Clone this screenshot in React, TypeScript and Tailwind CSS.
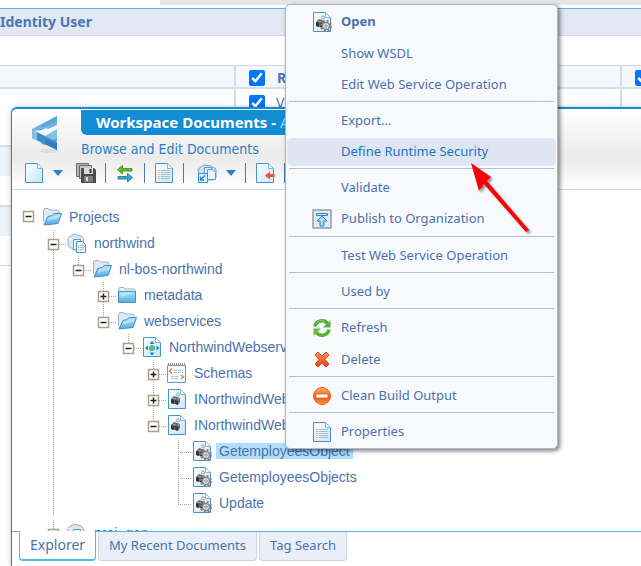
import { useState, type ReactNode } from "react";

/* ---------- icons ---------- */

type IconName =
  | "folder" | "folderOpen" | "project" | "package" | "schema" | "service"
  | "operation" | "publish" | "refresh" | "delete" | "stop" | "list"
  | "page" | "saveAll" | "swap" | "link" | "exit";

const Sheet = () => (
  <>
    <path d="M1.5 .5h12l5 5v14h-17z" fill="url(#sheet)" stroke="#4a93c9" />
    <path d="M13.5 .5v5h5z" fill="#fff" stroke="#7fb9e2" />
  </>
);

const Camera = () => (
  <g>
    <path d="M4 10l3-3 3 1 3 1v4l-2 3-2-2-2 1-3-1z" fill="#6b6b6b" />
    <path d="M4 10l3 1v4l-3-1zM8 11l3 1v4l-3-1z" fill="#333" />
    <circle cx="11" cy="5.500" r="1.500" fill="none" stroke="#9d9d9d" />
    <path d="M6 9l3 1M11 8l1 3" stroke="#a5a5a5" />
  </g>
);

const drawings: Record<IconName, ReactNode> = {
  folder: (
    <>
      <path d="M1.500 16V4l1-1.500h4L8 4h9l1.500 1.500V16z" fill="#e5edf2" stroke="#9db3c1" />
      <path d="M1.500 6.500h17v11h-17z" fill="url(#blue)" stroke="#3d93cb" />
      <path d="M3 8l14-1-13 6z" fill="#fff" opacity=".3" />
    </>
  ),
  folderOpen: (
    <>
      <path d="M1.500 15V3l1-1.500h4L8 3h8l1 1v5" fill="#dfe9ef" stroke="#9db3c1" />
      <path d="M6 9.500l4-1 2-2h7.500l-3.500 10L2 18z" fill="url(#blue)" stroke="#3990ca" />
      <path d="M7 10l11-2-1 3-12 3z" fill="#fff" opacity=".35" />
    </>
  ),
  project: (
    <>
      <path d="M1 5l6-4 7 2 3 3-2 9-8 2-6-4z" fill="#dde5eb" stroke="#9aaebb" />
      <path d="M1 5l6 2v9" fill="none" stroke="#fff" />
      <path d="M6.500 6.500h7v10h-7z" fill="#e8f5fd" stroke="#4ba3d8" />
      <path d="M9.500 8.500h6l3 3v8h-9z" fill="#f0f9ff" stroke="#3d96d0" />
      <path d="M11 12.500h1m-1 2h1m-1 2h1" stroke="#f08a3c" />
      <path d="M13 12.500h4m-4 2h4m-4 2h4" stroke="#9dbdd3" />
    </>
  ),
  package: (
    <>
      <Sheet />
      <circle cx="10" cy="11" r="3" fill="#4fb3e4" />
      <path d="M8 10q3-2 3 1t-2 3-2-2z" fill="#69ba5c" />
      <path d="M10 4l2.500 3h-5zM10 18.500l2.500-3h-5zM3 11l3-2.500v5zM17.500 11l-3-2.500v5z" fill="#1487cf" />
    </>
  ),
  schema: (
    <>
      <path d="M.500 2.500h18v17H.500z" fill="#f5faff" stroke="#5a9fd4" />
      <path d="M1 1.500h18" stroke="#888" strokeWidth="3" strokeDasharray="1 1" />
      <path d="M5 5.500L2.500 8 5 10.500M14 12l2.500 2-2.500 2" fill="none" stroke="#ef8b22" strokeWidth="1.500" />
      <path d="M7 7.500h9M7 9.500h9M4 13.500h8M4 15.500h8" stroke="#abc3df" strokeDasharray="3 1" />
    </>
  ),
  service: (
    <>
      <Sheet />
      <Camera />
    </>
  ),
  operation: (
    <>
      <Sheet />
      <Camera />
      <circle cx="14" cy="14" r="5" fill="none" stroke="#808080" strokeWidth="2" strokeDasharray="2 1.927" />
      <circle cx="14" cy="14" r="3.500" fill="#eee" stroke="#858585" strokeWidth="1.500" />
      <circle cx="14" cy="14" r="1.200" fill="#fff" stroke="#858585" />
    </>
  ),
  publish: (
    <>
      <path d="M1 1h18v18H1z" fill="#e2e9f1" stroke="#939ca8" strokeWidth="1.500" />
      <path d="M4.500 4.500h11v2h-11z" fill="#c5e6fa" stroke="#2d86c0" />
      <path d="M10 7l5 5h-3v5H8v-5H5z" fill="#a9dcfa" stroke="#2d86c0" />
    </>
  ),
  refresh: (
    <>
      <path d="M3 8.500C4 2.500 12 1 15.500 5.500" fill="none" stroke="#4fa82e" strokeWidth="3.500" />
      <path d="M18.500 2v7.500H11z" fill="#5bb336" />
      <path d="M17 11.500c-1 6-9 7.500-12.500 3" fill="none" stroke="#58b034" strokeWidth="3.500" />
      <path d="M1.500 18v-7.500H9z" fill="#68bf3d" />
      <path d="M4 6c2-4 7-4 9-2" fill="none" stroke="#9bd76c" />
    </>
  ),
  delete: (
    <path d="M3 5l3-3 4 4 4-4 3 3-4 4.500 4 4.500-3 3-4-4-4 4-3-3 4-4.500z" fill="url(#red)" stroke="#d5491f" />
  ),
  stop: (
    <>
      <circle cx="10" cy="10" r="8.500" fill="url(#orange)" stroke="#e4621d" />
      <rect x="4" y="8" width="12" height="4" fill="#fff" stroke="#e56c32" />
    </>
  ),
  list: (
    <>
      <Sheet />
      <path d="M4 7.500h1.500M4 9.500h1.500M4 11.500h1.500M4 13.500h1.500M4 15.500h1.500" stroke="#ec9c6d" />
      <path d="M7 7.500h9M7 9.500h9M7 11.500h9M7 13.500h9M7 15.500h9" stroke="#a9bfce" />
    </>
  ),
  page: <Sheet />,
  saveAll: (
    <>
      <path d="M.500 .500h12v13H.500z" fill="#b5b5b5" stroke="#6e6e6e" />
      <path d="M3.500 2.500h12v13h-12z" fill="#c9c9c9" stroke="#666" />
      <path d="M5 5h13l2 2v13H5z" fill="#4a4a4a" />
      <path d="M8 5h9v6H8z" fill="#dadada" />
      <path d="M13.500 6h2v4h-2z" fill="#333" />
      <path d="M8 13h9v6H8z" fill="#7d7d7d" />
      <path d="M10 14h2v4h-2z" fill="#ddd" />
    </>
  ),
  swap: (
    <>
      <path d="M2.500 6.500l5-4v3H17v2.500H7.500v3z" fill="#68b82b" stroke="#4f9e1c" />
      <path d="M17.500 14.500l-5-4v3H3V16h9.500v3z" fill="#45a0cf" stroke="#2a84b5" />
    </>
  ),
  link: (
    <>
      <path d="M1 6l6-4 7 1 5 3v9l-3 2H3z" fill="#cfe3ef" stroke="#7aa5bf" />
      <path d="M7.500 4.500h7v9h-7z" fill="#eaf6fd" stroke="#4c9fd2" />
      <path d="M10.500 6.500h5l3 3v7h-8z" fill="#eaf6fd" stroke="#4c9fd2" />
      <path d="M1.500 10.500h9v9h-9z" fill="#d8effc" stroke="#3b95cc" />
      <path d="M8 12.500l-4.500 4.500M3.500 13.500V17H7" fill="none" stroke="#2d88c4" strokeWidth="1.500" />
    </>
  ),
  exit: (
    <>
      <Sheet />
      <path d="M10 12.500l5-4v2.500h4.500v3H15v2.500z" fill="#f0562a" />
    </>
  ),
};

const Icon = ({ name }: { name: IconName }) => (
  <svg viewBox="0 0 20 20" className="size-5 shrink-0" aria-hidden="true">
    {drawings[name]}
  </svg>
);

const Gradients = () => (
  <svg width="0" height="0" className="absolute" aria-hidden="true">
    <defs>
      <linearGradient id="sheet" x1="0" y1="0" x2="1" y2="1">
        <stop offset="0" stopColor="#fbfeff" />
        <stop offset="1" stopColor="#c9e6fa" />
      </linearGradient>
      <linearGradient id="blue" x1="0" y1="0" x2="0" y2="1">
        <stop offset="0" stopColor="#b3e0fa" />
        <stop offset="1" stopColor="#52ade3" />
      </linearGradient>
      <linearGradient id="red" x1="0" y1="0" x2="0" y2="1">
        <stop offset="0" stopColor="#f9935a" />
        <stop offset="1" stopColor="#f03c12" />
      </linearGradient>
      <linearGradient id="orange" x1="0" y1="0" x2="0" y2="1">
        <stop offset="0" stopColor="#fdb45c" />
        <stop offset=".6" stopColor="#f25a17" />
        <stop offset="1" stopColor="#fb9a3a" />
      </linearGradient>
    </defs>
  </svg>
);

/* ---------- page behind the window ---------- */

const Check = ({ label }: { label: string }) => (
  <input type="checkbox" defaultChecked aria-label={label} className="m-0 size-4 shrink-0 accent-[#0075ff]" />
);

const IdentityPage = () => (
  <main className="overflow-hidden">
    <div className="flex h-2 justify-end">
      <div className="h-[5px] w-3/4 bg-[#e6e6e6]" />
    </div>
    <h1 className="h-7 border-t border-b border-t-[#4db8ee] border-b-[#cbd7e9] bg-[#e1e7f3] text-sm leading-[26px] font-bold text-[#4a76b3]">
      Identity User
    </h1>
    <div className="h-[29px]" />
    <table className="w-full table-fixed border-collapse border-t border-[#cfdae9] text-sm text-[#4a76b3]">
      <colgroup>
        <col className="w-[235px]" />
        <col className="w-[386px]" />
        <col />
      </colgroup>
      <thead>
        <tr className="h-[22px] border-b-2 border-[#d3deec] bg-[#f5f7fc] text-left">
          <th className="p-0" />
          <th className="border-l-2 border-[#d3deec] p-0 pl-[13px]">
            <div className="flex h-5 items-center gap-3 pt-1">
              <Check label="Select all roles" />
              <span className="leading-4">R</span>
            </div>
          </th>
          <th className="border-l-2 border-[#d3deec] p-0 pl-[13px]">
            <div className="flex h-5 items-center pt-1">
              <Check label="Select all rights" />
            </div>
          </th>
        </tr>
      </thead>
      <tbody>
        <tr className="h-[58px] border-b-2 border-[#d3deec] align-top">
          <td />
          <td className="border-l-2 border-[#d3deec] p-0 pl-[13px]">
            <div className="flex h-7 items-center gap-[11px]">
              <Check label="Viewer" />
              <span className="leading-4">V</span>
            </div>
          </td>
          <td className="border-l-2 border-[#d3deec]" />
        </tr>
        <tr className="h-[30px] bg-[#edf1f9]"><td colSpan={3} /></tr>
        <tr className="h-[30px] border-b-2 border-[#d3deec]"><td colSpan={3} /></tr>
        <tr className="h-[30px] bg-[#edf1f9]"><td colSpan={3} /></tr>
        <tr className="h-[30px] border-b border-[#cbd7e9]"><td colSpan={3} /></tr>
      </tbody>
    </table>
  </main>
);

/* ---------- project tree ---------- */

type Node = {
  label: string;
  level: number;
  icon: IconName;
  state?: "open" | "closed";
  last?: boolean;
  selected?: boolean;
};

const nodes: Node[] = [
  { label: "Projects", level: 0, icon: "folderOpen", state: "open" },
  { label: "northwind", level: 1, icon: "project", state: "open" },
  { label: "nl-bos-northwind", level: 2, icon: "folderOpen", state: "open", last: true },
  { label: "metadata", level: 3, icon: "folder", state: "closed" },
  { label: "webservices", level: 3, icon: "folderOpen", state: "open", last: true },
  { label: "NorthwindWebserv", level: 4, icon: "package", state: "open", last: true },
  { label: "Schemas", level: 5, icon: "schema", state: "closed" },
  { label: "INorthwindWeb", level: 5, icon: "service", state: "closed" },
  { label: "INorthwindWeb", level: 5, icon: "service", state: "open", last: true },
  { label: "GetemployeesObject", level: 6, icon: "operation", selected: true },
  { label: "GetemployeesObjects", level: 6, icon: "operation" },
  { label: "Update", level: 6, icon: "operation", last: true },
];

const Guide = ({ node }: { node?: Node }) => (
  <svg viewBox="0 0 25 26" className="h-[26px] w-[25px] shrink-0" aria-hidden="true">
    {(!node || node.level > 0) && (
      <path d={node?.last ? "M12.500 0v16" : "M12.500 0v26"} stroke="#a8a294" strokeDasharray="1 1" />
    )}
    {node && node.level > 0 && <path d="M12 14.500h13" stroke="#a8a294" strokeDasharray="1 1" />}
    {node?.state && (
      <g transform={node.level > 0 ? "translate(0 1)" : "translate(0 -1)"}>
        <rect x="7.500" y="8.500" width="10" height="10" fill="#fff" stroke="#a7a08c" strokeWidth="1.500" />
        <path d={node.state === "open" ? "M9.500 13.500h6" : "M9.500 13.500h6M12.500 10.500v6"} stroke="#222" strokeWidth="1.500" />
      </g>
    )}
  </svg>
);

const TreeRow = ({ node }: { node: Node }) => (
  <li className="flex h-[26px] items-center">
    {Array.from({ length: node.level }, (_, column) =>
      column === 1 ? <Guide key={column} /> : <span key={column} className="w-[25px] shrink-0" />
    )}
    {node.state ? (
      <button type="button" aria-label={`Toggle ${node.label}`} className="shrink-0">
        <Guide node={node} />
      </button>
    ) : (
      <Guide node={node} />
    )}
    <span className="mr-1 ml-px">
      <Icon name={node.icon} />
    </span>
    <span className={node.selected ? "bg-[#b0dffb] px-[3px] leading-4" : "px-[3px] leading-4"}>{node.label}</span>
  </li>
);

/* ---------- workspace window ---------- */

const Tool = ({ icon, label, spaced }: { icon: IconName; label: string; spaced?: boolean }) => (
  <button type="button" aria-label={label} className={spaced ? "ml-1 shrink-0" : "shrink-0"}>
    <Icon name={icon} />
  </button>
);

const Caret = ({ label }: { label: string }) => (
  <button type="button" aria-label={label} className="shrink-0">
    <svg viewBox="0 0 10 6" className="h-1.5 w-2.5"><path d="M0 0h10L5 6z" fill="#2b7fc3" /></svg>
  </button>
);

const Divider = () => <span className="h-5 w-px shrink-0 bg-[#4a7cae]" />;

const Logo = () => (
  <svg viewBox="0 0 26 38" className="h-[38px] w-[26px] shrink-0" aria-hidden="true">
    <ellipse cx="17" cy="35" rx="9" ry="2" fill="#d9dee2" />
    <path d="M25 0v9l-11 5-14 1v-2z" fill="#6bb5e2" />
    <path d="M25 0v5L12 11l-4-1z" fill="#5aa6d8" />
    <path d="M0 14l13 6 12-3v8l-12 4-3-1z" fill="#58a9dc" />
    <path d="M13 20l12-7v9l-12 6z" fill="#7cc3ea" />
    <path d="M0 14l25 12v8L0 22z" fill="#3d8dc8" />
    <path d="M0 14l5 2v8l-5-2z" fill="#7dc1ea" />
    <path d="M8 15l6-3 5 3-5 3z" fill="#f2faff" />
    <path d="M14 23l11 5v6l-12-6z" fill="#2d7fbd" />
  </svg>
);

const tabs = ["Explorer", "My Recent Documents", "Tag Search"];

const WorkspaceWindow = () => {
  const [active, setActive] = useState("Explorer");
  return (
    <section className="absolute top-[107px] right-0 bottom-0 left-[11px] flex flex-col rounded-tl-md border-t-2 border-l border-[#128cd2] bg-white shadow-[0_0_4px_rgba(0,0,0,0.25)]">
      <header className="shrink-0 rounded-tl-md border-b border-[#cfdae9] bg-linear-to-b from-white via-[#ebebeb] via-60% to-white">
        <div className="flex h-[52px] pt-px pl-5">
          <div className="w-[49px] shrink-0 pt-1.5">
            <Logo />
          </div>
          <div>
            <h2 className="h-[25px] w-[380px] rounded-b-md bg-[#128cd2] pl-[15px] text-[15px] leading-[25px] font-bold whitespace-nowrap text-white">
              Workspace Documents - <span className="font-normal text-[#7ce3f5]">A</span>
            </h2>
            <p className="pt-0.5 font-['DejaVu_Sans_Condensed','Noto_Sans',sans-serif] text-sm leading-6 text-[#2b7fc3]">
              Browse and Edit Documents
            </p>
          </div>
        </div>
        <div className="flex h-7 items-center gap-[9px] overflow-hidden pb-1 pl-3">
          <Tool icon="page" label="New document" />
          <Caret label="New document options" />
          <Tool icon="saveAll" label="Save all" spaced />
          <Divider />
          <Tool icon="swap" label="Synchronize" />
          <Divider />
          <Tool icon="list" label="Properties" />
          <Divider />
          <Tool icon="link" label="Add document" spaced />
          <Caret label="Add document options" />
          <Divider />
          <Tool icon="exit" label="Close document" />
          <Divider />
        </div>
      </header>
      <ul className="min-h-0 flex-1 overflow-hidden pt-3.5 pl-1 font-['Liberation_Sans',Arial,sans-serif] text-sm text-[#4a72ae]">
        {nodes.map((node, index) => <TreeRow key={index} node={node} />)}
        <li className="pt-1">
          <ul>
            <TreeRow node={{ label: "proj_gen", level: 1, icon: "project", state: "open" }} />
          </ul>
        </li>
      </ul>
      <nav className="flex h-[35px] shrink-0 items-start gap-0.5 border-t border-[#4db8ee] pl-[7px] text-[#4a72ae]">
        {tabs.map((tab) => (
          <button
            key={tab}
            type="button"
            onClick={() => setActive(tab)}
            className={
              tab === active
                ? "-mt-px h-[30px] rounded-b border border-t-0 border-b-2 border-[#4db8ee] bg-white px-2.5 text-sm"
                : "h-[29px] rounded-b border border-t-0 border-[#c9d6e8] bg-[#ebeff8] px-2.5 text-[13px]"
            }
          >
            {tab}
          </button>
        ))}
      </nav>
    </section>
  );
};

/* ---------- context menu ---------- */

type Entry = { label: string; icon?: IconName; bold?: boolean; hot?: boolean; tall?: boolean };

const groups: Entry[][] = [
  [{ label: "Open", icon: "operation", bold: true, tall: true }, { label: "Show WSDL" }, { label: "Edit Web Service Operation" }],
  [{ label: "Export..." }, { label: "Define Runtime Security", hot: true }],
  [{ label: "Validate" }, { label: "Publish to Organization", icon: "publish", tall: true }],
  [{ label: "Test Web Service Operation" }],
  [{ label: "Used by" }],
  [{ label: "Refresh", icon: "refresh", tall: true }, { label: "Delete", icon: "delete" }],
  [{ label: "Clean Build Output", icon: "stop" }],
  [{ label: "Properties", icon: "list" }],
];

const ContextMenu = () => (
  <div role="menu" className="absolute top-1 left-[285px] w-[273px] rounded-[5px] border border-[#a3b9d6] bg-[#f8f9fd] py-px text-[13px] text-[#4a72ae] shadow-[2px_2px_4px_rgba(0,0,0,0.5)]">
    {groups.map((group, index) => (
      <div key={index}>
        {index > 0 && <hr className="mx-[3px] mt-px mb-[3px] border-[#a9c0de]" />}
        {group.map((entry) => (
          <div key={entry.label} className={entry.tall ? "flex h-8 items-center px-px" : "flex h-[31px] items-center px-px"}>
            <button
              type="button"
              role="menuitem"
              className={
                "flex h-7 w-full items-center gap-[9px] rounded-[5px] pl-[25px] whitespace-nowrap " +
                (entry.hot ? "bg-[#dfe6f2] text-[#1b74c5]" : entry.bold ? "font-bold" : "")
              }
            >
              <span className="size-5 shrink-0">{entry.icon && <Icon name={entry.icon} />}</span>
              {entry.label}
            </button>
          </div>
        ))}
      </div>
    ))}
  </div>
);

const Arrow = () => (
  <svg viewBox="0 0 66 76" className="pointer-events-none absolute top-[160px] left-[468px] h-[76px] w-[66px] drop-shadow-[2px_2px_1px_rgba(0,0,0,0.4)]" aria-hidden="true">
    <path d="M3 3l20 14-4 4 42 49-3 2-42-48-5 7z" fill="#fb0007" />
  </svg>
);

export default function App() {
  return (
    <div className="relative min-h-screen overflow-hidden bg-white font-['Noto_Sans',sans-serif]">
      <Gradients />
      <IdentityPage />
      <WorkspaceWindow />
      <ContextMenu />
      <Arrow />
    </div>
  );
}
